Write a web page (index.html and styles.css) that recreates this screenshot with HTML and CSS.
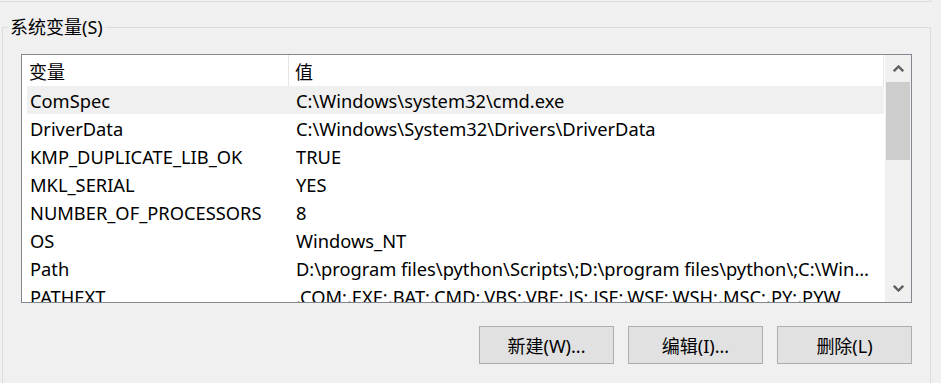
FILE: index.html
```html
<!DOCTYPE html>
<html lang="zh-CN">
<head>
  <meta charset="UTF-8">
  <title>系统变量</title>
  <link rel="stylesheet" href="styles.css">
</head>
<body>
  <div class="prev_group"></div>

  <fieldset class="group">
    <legend>系统变量(S)</legend>
    <div class="group_body">

      <div class="listview">
        <div class="list_main">
          <div class="list_header">
            <div class="col_name">变量</div>
            <div class="col_value">值</div>
          </div>
          <div class="list_rows">
            <div class="row selected"><div class="col_name">ComSpec</div><div class="col_value">C:\Windows\system32\cmd.exe</div></div>
            <div class="row"><div class="col_name">DriverData</div><div class="col_value">C:\Windows\System32\Drivers\DriverData</div></div>
            <div class="row"><div class="col_name">KMP_DUPLICATE_LIB_OK</div><div class="col_value">TRUE</div></div>
            <div class="row"><div class="col_name">MKL_SERIAL</div><div class="col_value">YES</div></div>
            <div class="row"><div class="col_name">NUMBER_OF_PROCESSORS</div><div class="col_value">8</div></div>
            <div class="row"><div class="col_name">OS</div><div class="col_value">Windows_NT</div></div>
            <div class="row"><div class="col_name">Path</div><div class="col_value">D:\program files\python\Scripts\;D:\program files\python\;C:\Windows\system32;C:\Windows</div></div>
            <div class="row"><div class="col_name">PATHEXT</div><div class="col_value">.COM;.EXE;.BAT;.CMD;.VBS;.VBE;.JS;.JSE;.WSF;.WSH;.MSC;.PY;.PYW</div></div>
          </div>
        </div>
        <div class="scrollbar">
          <div class="scroll_btn">
            <svg width="11" height="7" viewBox="0 0 11 7"><polyline points="0.8,6.2 5.5,1.5 10.2,6.2" fill="none" stroke="#606060" stroke-width="2.4"/></svg>
          </div>
          <div class="scroll_track"><div class="scroll_thumb"></div></div>
          <div class="scroll_btn">
            <svg width="11" height="7" viewBox="0 0 11 7"><polyline points="0.8,0.8 5.5,5.5 10.2,0.8" fill="none" stroke="#606060" stroke-width="2.4"/></svg>
          </div>
        </div>
      </div>

      <div class="buttons">
        <button>新建(W)...</button>
        <button>编辑(I)...</button>
        <button>删除(L)</button>
      </div>
    </div>
  </fieldset>
</body>
</html>
```
FILE: styles.css
```css
html,body{
    margin: 0;
    height: 100%;
    overflow: hidden;
    background: #f0f0f0;
    font-family: "Noto Sans", "Noto Sans CJK SC", sans-serif;
    font-size: 18px;
    color: #000;
}
button{
    font-family: inherit;
    font-size: 100%;
}

.prev_group{
    width: 930px;
    height: 1px;
    border-bottom: 1px solid #dcdcdc;
    border-right: 1px solid #dcdcdc;
}

.group{
    box-sizing: border-box;
    width: 929px;
    min-width: 0;
    margin: 15px 0 0 2px;
    padding: 0;
    border: 1px solid #dcdcdc;
}
.group legend{
    margin-left: 5px;
    padding: 0 2px;
    line-height: 20px;
}
.group_body{
    padding: 17px 18px 40px 18px;
}

.listview{
    display: flex;
    height: 249px;
    box-sizing: border-box;
    border: 1px solid #828790;
    background: #fff;
}
.list_main{
    flex: 1;
    min-width: 0;
    overflow: hidden;
}
.list_header{
    display: flex;
    height: 31px;
}
.list_header .col_name{
    width: 259px;
    padding-left: 7px;
    display: flex;
    align-items: center;
    border-right: 1px solid #e5e5e5;
}
.list_header .col_value{
    flex: 1;
    padding-left: 6px;
    display: flex;
    align-items: center;
    border-right: 1px solid #e5e5e5;
}

.row{
    display: flex;
    height: 28px;
    align-items: center;
    margin-left: 5px;
    white-space: nowrap;
    font-size: 18.3px;
}
.row.selected{
    background: #f0f0f0;
}
.row .col_name{
    width: 258px;
    padding-left: 3px;
}
.row .col_value{
    flex: 1;
    min-width: 0;
    padding: 0 12px 0 8px;
    overflow: hidden;
    text-overflow: ellipsis;
}

.scrollbar{
    width: 26px;
    display: flex;
    flex-direction: column;
    background: #f0f0f0;
    margin-left: 1px;
}
.scroll_btn{
    height: 27px;
    display: flex;
    align-items: center;
    justify-content: center;
}
.scroll_track{
    flex: 1;
    padding: 0 1px;
}
.scroll_thumb{
    height: 78px;
    background: #cdcdcd;
}

.buttons{
    display: flex;
    justify-content: flex-end;
    gap: 14px;
    margin-top: 23px;
}
.buttons button{
    width: 135px;
    height: 38px;
    background: #e1e1e1;
    border: 1px solid #adadad;
    border-radius: 0;
    color: #000;
    padding: 0;
}
```
